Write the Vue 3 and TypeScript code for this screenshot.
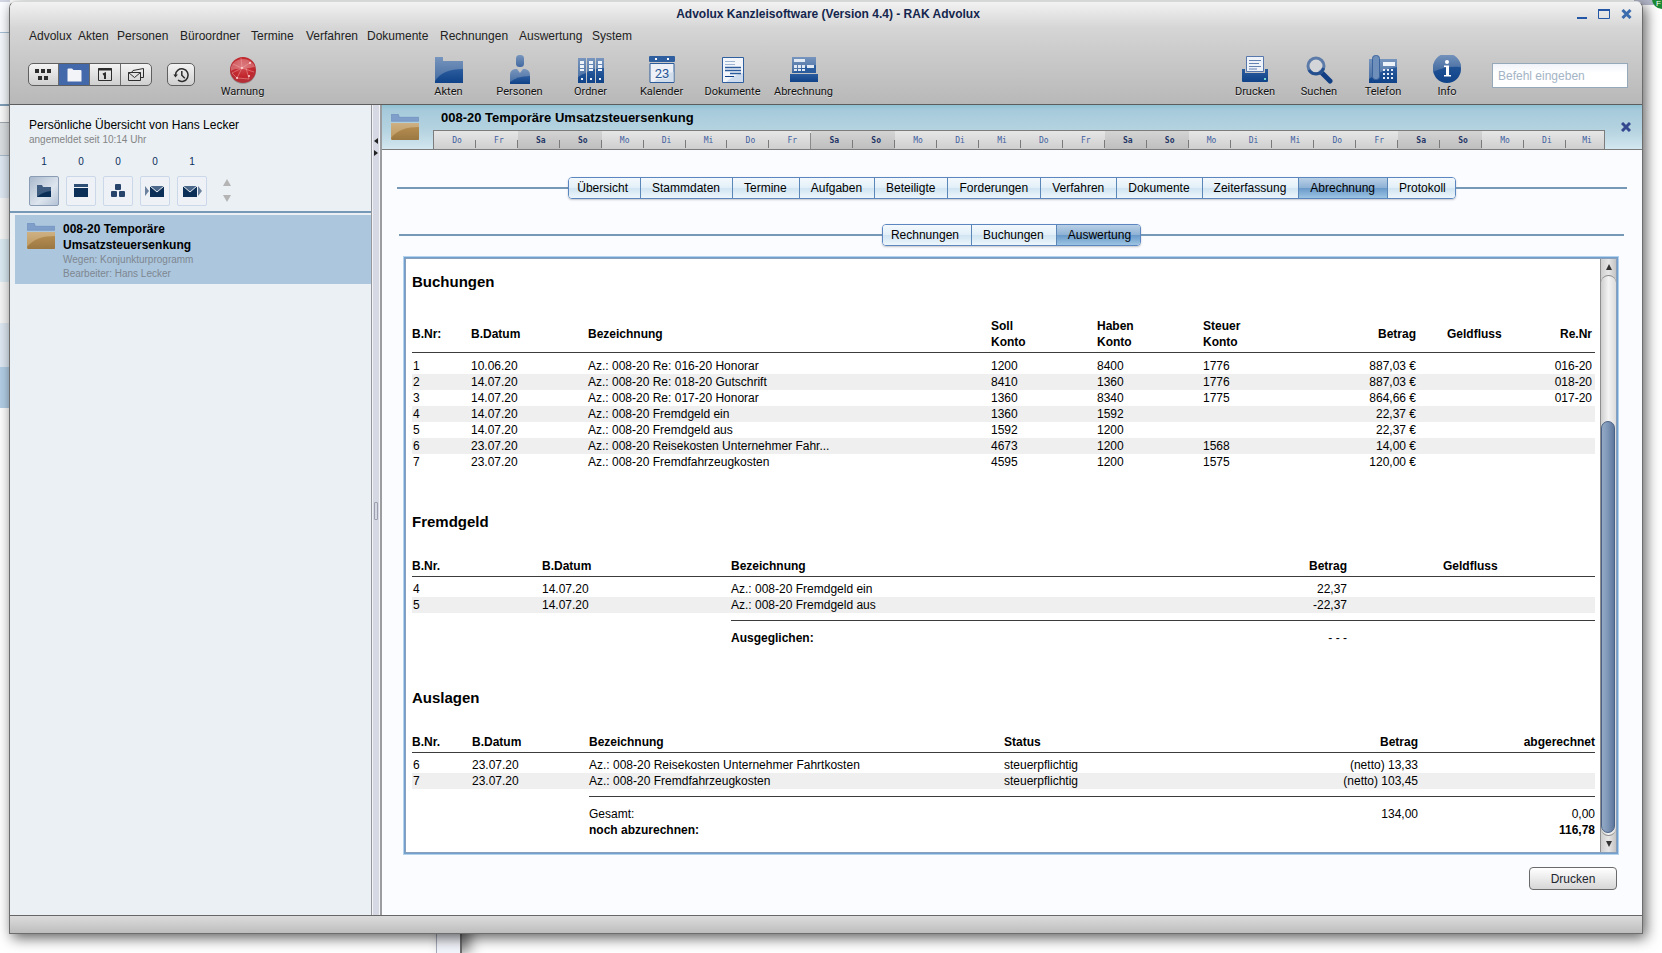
<script setup lang="ts">
import { ref } from 'vue'

interface Booking {
  nr: number
  date: string
  text: string
  soll: string
  haben: string
  steuer: string
  amount: string
  bill: string
}

const menu = ['Advolux', 'Akten', 'Personen', 'Büroordner', 'Termine', 'Verfahren', 'Dokumente', 'Rechnungen', 'Auswertung', 'System']
const tabs = ['Übersicht', 'Stammdaten', 'Termine', 'Aufgaben', 'Beteiligte', 'Forderungen', 'Verfahren', 'Dokumente', 'Zeiterfassung', 'Abrechnung', 'Protokoll']
const subTabs = ['Rechnungen', 'Buchungen', 'Auswertung']
const activeTab = ref('Abrechnung')
const activeSub = ref('Auswertung')
const command = ref('')

const week = ['Mo', 'Di', 'Mi', 'Do', 'Fr', 'Sa', 'So']
const days = Array.from({ length: 28 }, (_, i) => week[(i + 3) % 7])
const isWeekend = (d: string) => d === 'Sa' || d === 'So'

const bookings: Booking[] = [
  { nr: 1, date: '10.06.20', text: 'Az.: 008-20 Re: 016-20 Honorar', soll: '1200', haben: '8400', steuer: '1776', amount: '887,03 €', bill: '016-20' },
  { nr: 2, date: '14.07.20', text: 'Az.: 008-20 Re: 018-20 Gutschrift', soll: '8410', haben: '1360', steuer: '1776', amount: '887,03 €', bill: '018-20' },
  { nr: 3, date: '14.07.20', text: 'Az.: 008-20 Re: 017-20 Honorar', soll: '1360', haben: '8340', steuer: '1775', amount: '864,66 €', bill: '017-20' },
  { nr: 4, date: '14.07.20', text: 'Az.: 008-20 Fremdgeld ein', soll: '1360', haben: '1592', steuer: '', amount: '22,37 €', bill: '' },
  { nr: 5, date: '14.07.20', text: 'Az.: 008-20 Fremdgeld aus', soll: '1592', haben: '1200', steuer: '', amount: '22,37 €', bill: '' },
  { nr: 6, date: '23.07.20', text: 'Az.: 008-20 Reisekosten Unternehmer Fahr...', soll: '4673', haben: '1200', steuer: '1568', amount: '14,00 €', bill: '' },
  { nr: 7, date: '23.07.20', text: 'Az.: 008-20 Fremdfahrzeugkosten', soll: '4595', haben: '1200', steuer: '1575', amount: '120,00 €', bill: '' },
]
const foreignFunds = [
  { nr: 4, date: '14.07.20', text: 'Az.: 008-20 Fremdgeld ein', amount: '22,37' },
  { nr: 5, date: '14.07.20', text: 'Az.: 008-20 Fremdgeld aus', amount: '-22,37' },
]
const expenses = [
  { nr: 6, date: '23.07.20', text: 'Az.: 008-20 Reisekosten Unternehmer Fahrtkosten', status: 'steuerpflichtig', amount: '(netto) 13,33' },
  { nr: 7, date: '23.07.20', text: 'Az.: 008-20 Fremdfahrzeugkosten', status: 'steuerpflichtig', amount: '(netto) 103,45' },
]
</script>

<template>
  <div class="desktop">
    <div class="behind-left"></div>
    <div class="behind-bottom"></div>
    <div class="behind-tab"></div>
    <div class="behind-badge">F</div>

    <svg class="defs" width="0" height="0" aria-hidden="true">
      <defs>
        <linearGradient id="blueTop" x1="0" y1="0" x2="0" y2="1">
          <stop offset="0" stop-color="#7795bd" /><stop offset="1" stop-color="#41699f" />
        </linearGradient>
        <linearGradient id="blueLow" x1="0" y1="0" x2="0" y2="1">
          <stop offset="0" stop-color="#2b5c9e" /><stop offset="1" stop-color="#0f4288" />
        </linearGradient>
        <linearGradient id="tan" x1="0" y1="0" x2="0" y2="1">
          <stop offset="0" stop-color="#cdb083" /><stop offset="1" stop-color="#bd965a" />
        </linearGradient>
        <linearGradient id="tanLow" x1="0" y1="0" x2="0" y2="1">
          <stop offset="0" stop-color="#b48c50" /><stop offset="1" stop-color="#9b7842" />
        </linearGradient>
        <radialGradient id="globe" cx="0.5" cy="0.4" r="0.6">
          <stop offset="0" stop-color="#cf4a50" /><stop offset="0.6" stop-color="#c2262c" /><stop offset="1" stop-color="#b0323a" />
        </radialGradient>
        <symbol id="caseFolder" viewBox="0 0 28 26">
          <path d="M.3.300h7l1 3h19.400v4H.3z" fill="#7f9fca" stroke="#6a8ab8" stroke-width="0.6" />
          <path d="M0 9h28V25a1 1 0 0 1-1 1H1a1 1 0 0 1-1-1z" fill="url(#tan)" />
          <path d="M0 24C6 16 16 13 28 13v12a1 1 0 0 1-1 1H1z" fill="url(#tanLow)" />
        </symbol>
      </defs>
    </svg>

    <div class="window">
      <header class="head">
        <div class="titlebar">
          <h1>Advolux Kanzleisoftware (Version 4.4) - RAK Advolux</h1>
          <div class="wincontrols">
            <button aria-label="Minimieren"><svg width="10" height="10"><path d="M0 9h10" stroke="#2458a6" stroke-width="2" /></svg></button>
            <button aria-label="Maximieren"><svg width="12" height="10"><path d="M.5 1.500h11v8H.5z" fill="none" stroke="#2458a6" /><path d="M0 1h12" stroke="#2458a6" stroke-width="2" /></svg></button>
            <button aria-label="Schließen"><svg width="11" height="10"><path d="M1.500 1l8 8M9.500 1l-8 8" stroke="#3b6cad" stroke-width="3" /></svg></button>
          </div>
        </div>
        <nav class="menu">
          <button v-for="m in menu" :key="m">{{ m }}</button>
        </nav>
        <div class="toolbar">
          <div class="views">
            <div class="segment">
              <button aria-label="Kacheln"><svg width="17" height="12" fill="#2d2d2d"><path d="M0 0h4v4H0zM6 0h4v4H6zM12 0h4v4h-4zM3 7h4v4H3zM9 7h4v4H9z" /></svg></button>
              <button class="on" aria-label="Akten"><svg width="15" height="14"><path d="M.5 1.500Q.5.500 1.500.500H5L6.500 2H13.500Q14.500 2 14.500 3V13.500H.5z" fill="#f2f4f8" /></svg></button>
              <button aria-label="Kalender"><svg width="14" height="13" fill="none" stroke="#2d2d2d"><path d="M.5.500h13v12H.5z" /><path d="M0 1.500h14" stroke-width="2" /><path d="M5 6.500L7 5.500v5.500" stroke-width="2" /></svg></button>
              <button aria-label="Post"><svg width="17" height="13" fill="none" stroke="#2d2d2d"><path d="M.5 4.500h12v8H.5zM.5 4.500l6 5 6-5" /><path d="M3.500 4.500L5 2.500 15.500.500v9h-3" /></svg></button>
            </div>
            <button class="clock" aria-label="Verlauf"><svg width="17" height="16" fill="none" stroke="#2d2d2d" stroke-width="1.500"><path d="M2.500 8A6.300 6.300 0 1 1 5 13.200" /><path d="M8.800 4v4.200l3 3" /><path d="M.3 7.500h4.600L2.500 10.500z" fill="#2d2d2d" stroke="none" /></svg></button>
            <button class="tool warn">
              <svg width="28" height="29"><circle cx="14" cy="16" r="13" fill="#00000030" /><circle cx="14" cy="15" r="13" fill="url(#globe)" />
                <path d="M2 16C8 12 14 15 26 12A13 13 0 0 0 2 12z" fill="#fff" opacity=".28" />
                <g fill="none" stroke="#f2a6a9" stroke-width=".5"><path d="M4 9L13 13L22 7M13 13L8 23L20 24M13 13L25 17M3 18L13 13L12 3M8 23L3 18M20 24L17 13" /></g>
                <g fill="#ffd8d9"><circle cx="13" cy="13" r="1" /><circle cx="8" cy="23" r="1" /><circle cx="20" cy="21" r="1" /><circle cx="21" cy="8" r="1" /></g></svg>
              <span>Warnung</span>
            </button>
          </div>

          <div class="tools main-tools">
            <button class="tool">
              <svg width="28" height="29"><path d="M0 2h8v4h20v22H0z" fill="url(#blueTop)" /><path d="M0 28V26C5 18 14 14 28 14v14z" fill="url(#blueLow)" /></svg>
              <span>Akten</span>
            </button>
            <button class="tool">
              <svg width="22" height="29"><rect x="7" y="0" width="8" height="12" rx="3.500" fill="url(#blueTop)" /><path d="M1 29V20Q1 15 6 14L8 14 11 18 14 14 16 14Q21 15 21 20V29z" fill="url(#blueTop)" /><path d="M1 29V27Q8 21 21 21V29z" fill="url(#blueLow)" /></svg>
              <span>Personen</span>
            </button>
            <button class="tool">
              <svg width="28" height="29"><path d="M1 3h8v25H1zM10 3h8v25h-8zM19 3h8v25h-8z" fill="url(#blueTop)" /><path d="M1 22Q5 19 9 18v10H1zM10 17q4-2 8-3v14h-8zM19 14q5-1 8-1v15h-8z" fill="url(#blueLow)" />
                <path d="M3 6h4v3H3zM3 10h4v3H3zM3 14h4v2H3zM12 6h4v3h-4zM12 10h4v3h-4zM12 14h4v2h-4zM21 6h4v3h-4zM21 10h4v3h-4zM21 14h4v2h-4zM4 23h2v2H4zM13 23h2v2h-2zM22 23h2v2h-2z" fill="#eef3fa" /></svg>
              <span>Ordner</span>
            </button>
            <button class="tool">
              <svg width="26" height="29"><rect x="0" y="1" width="26" height="6" rx="1" fill="#2f5f9f" /><path d="M6 3h2v2H6zM18 3h2v2h-2z" fill="#fff" /><path d="M1 8.500h24v19H1z" fill="#edf1f7" stroke="#2d5c9c" /><path d="M5 27Q14 18 24.500 17V27z" fill="#d3deec" /><text x="13" y="23" text-anchor="middle" font-family="Roboto, sans-serif" font-size="13" fill="#2a5596">23</text></svg>
              <span>Kalender</span>
            </button>
            <button class="tool">
              <svg width="22" height="29"><path d="M.5 2.500h21v25H.5z" fill="#f2f6fb" stroke="#2f5f9f" /><path d="M4 27Q12 20 21 18v9z" fill="#cfdcee" /><path d="M3 6.500h10M3 9.500h10" stroke="#9db3d2" /><path d="M3 12.500h16M3 15.500h16M8 18.500h11" stroke="#2d5c9c" stroke-width="1.500" /><path d="M3 21.500h9" stroke="#0f4288" /></svg>
              <span>Dokumente</span>
            </button>
            <button class="tool">
              <svg width="28" height="29"><path d="M2 2h24v16H2z" fill="url(#blueTop)" /><path d="M2 18Q12 11 26 10v8z" fill="#2b5c9e" /><path d="M4 4h11v3H4zM17 10h7v3h-7zM4 10h3v3H4zM8 10h3v3H8zM12 10h3v3h-3zM4 14h3v2H4zM8 14h3v2H8zM12 14h3v2h-3z" fill="#dfe8f3" /><path d="M0 19h28v8H0z" fill="url(#blueLow)" /></svg>
              <span>Abrechnung</span>
            </button>
          </div>

          <div class="tools side-tools">
            <button class="tool">
              <svg width="26" height="29"><path d="M4.500 1.500h17v15h-17z" fill="#eef2f9" stroke="#5878ad" /><path d="M7 5.500h12M7 8.500h10M7 11.500h12M7 14h8" stroke="#6482b2" /><path d="M0 14h3v4h20v-4h3v12a1 1 0 0 1-1 1H1a1 1 0 0 1-1-1z" fill="url(#blueLow)" /><path d="M22 23h2v2h-2z" fill="#6fd6d0" /></svg>
              <span>Drucken</span>
            </button>
            <button class="tool">
              <svg width="28" height="29"><path d="M16 17l9 9" stroke="#123f83" stroke-width="5" stroke-linecap="round" /><circle cx="11" cy="11" r="8" fill="#d9dbdf" fill-opacity=".7" stroke="#5c7ba8" stroke-width="3" /><path d="M4 15A8 8 0 0 0 18.500 13" fill="none" stroke="#234f8f" stroke-width="3" /></svg>
              <span>Suchen</span>
            </button>
            <button class="tool">
              <svg width="28" height="29"><path d="M0 4h28v24H0z" fill="url(#blueTop)" /><path d="M0 28V24Q14 14 28 12v16z" fill="url(#blueLow)" /><rect x="3.500" y=".5" width="7" height="24" rx="3" fill="#6f8fbb" stroke="#3a629d" /><path d="M14 7h12v4H14z" fill="#eef3fa" /><path d="M14 14h2v2h-2zM18 14h2v2h-2zM22 14h2v2h-2zM14 18h2v2h-2zM18 18h2v2h-2zM22 18h2v2h-2zM14 22h2v2h-2zM18 22h2v2h-2zM22 22h2v2h-2z" fill="#e6edf7" /></svg>
              <span>Telefon</span>
            </button>
            <button class="tool">
              <svg width="28" height="29"><circle cx="14" cy="14" r="14" fill="url(#blueLow)" /><path d="M0 17Q12 11 28 12A14 14 0 0 0 0 13z" fill="url(#blueTop)" /><g fill="#fff"><circle cx="14" cy="7" r="2" /><path d="M11 10.500h5V20h2v1.500h-7V20h2V12h-2z" /></g></svg>
              <span>Info</span>
            </button>
          </div>
          <input v-model="command" class="command" type="text" aria-label="Befehl eingeben" placeholder="Befehl eingeben" />
        </div>
      </header>

      <div class="body">
        <aside class="sidebar">
          <div class="overview">
            <h2>Persönliche Übersicht von Hans Lecker</h2>
            <p>angemeldet seit 10:14 Uhr</p>
            <div class="quick">
              <div class="q"><span>1</span><button class="on" aria-label="Akten"><svg width="14" height="14"><path d="M0 1h5l1 2h8v10H0z" fill="#3d5c80" /><path d="M0 13Q5 8 14 7v6z" fill="#0c2f57" /></svg></button></div>
              <div class="q"><span>0</span><button aria-label="Termine"><svg width="14" height="14" fill="#0c2f57"><path d="M0 0h14v3H0z" fill="#2f4f75" /><path d="M0 4h14v9H0z" /></svg></button></div>
              <div class="q"><span>0</span><button aria-label="Beteiligte"><svg width="14" height="14" fill="#27456b"><rect x="4" y="0" width="6" height="6" rx="1" /><rect x="0" y="7" width="6" height="6" rx="1" /><rect x="8" y="7" width="6" height="6" rx="1" /></svg></button></div>
              <div class="q"><span>0</span><button aria-label="Posteingang"><svg width="20" height="14"><path d="M0 2l4 5-4 5z" fill="#6a809c" /><path d="M5 2h14v11H5z" fill="#0c2f57" /><path d="M5 2l7 6 7-6" fill="#4c688b" stroke="#eaf0f5" /></svg></button></div>
              <div class="q"><span>1</span><button aria-label="Postausgang"><svg width="20" height="14"><path d="M16 2l4 5-4 5z" fill="#6a809c" /><path d="M1 2h14v11H1z" fill="#0c2f57" /><path d="M1 2l7 6 7-6" fill="#4c688b" stroke="#eaf0f5" /></svg></button></div>
              <div class="sort">
                <button aria-label="Aufwärts"><svg width="8" height="7"><path d="M4 0l4 7H0z" fill="#b4b4b4" /></svg></button>
                <button aria-label="Abwärts"><svg width="8" height="7"><path d="M0 0h8L4 7z" fill="#b4b4b4" /></svg></button>
              </div>
            </div>
          </div>
          <a class="case" href="#">
            <svg width="28" height="26"><use href="#caseFolder" /></svg>
            <span class="case-text">
              <strong>008-20 Temporäre<br />Umsatzsteuersenkung</strong>
              <small>Wegen: Konjunkturprogramm</small>
              <small>Bearbeiter: Hans Lecker</small>
            </span>
          </a>
        </aside>

        <div class="splitter">
          <button aria-label="Einklappen"><svg width="4" height="6"><path d="M4 0v6L0 3z" fill="#222" /></svg></button>
          <button aria-label="Ausklappen"><svg width="4" height="6"><path d="M0 0v6l4-3z" fill="#222" /></svg></button>
          <span class="grip"></span>
        </div>

        <main class="main">
          <div class="casebar">
            <svg class="casebar-icon" width="28" height="26"><use href="#caseFolder" /></svg>
            <div class="casebar-mid">
              <h2>008-20 Temporäre Umsatzsteuersenkung</h2>
              <div class="days">
                <div v-for="(d, i) in days" :key="i" class="day" :class="{ weekend: isWeekend(d), week: i === 8 }">{{ d }}</div>
              </div>
            </div>
            <button class="case-close" aria-label="Akte schließen"><svg width="10" height="10"><path d="M1 1l8 8M9 1L1 9" stroke="#33488e" stroke-width="3" /></svg></button>
          </div>

          <div class="tabrow">
            <div class="tabs">
              <button v-for="t in tabs" :key="t" :class="{ on: t === activeTab }" @click="activeTab = t">{{ t }}</button>
            </div>
          </div>
          <div class="tabrow sub">
            <div class="tabs">
              <button v-for="t in subTabs" :key="t" :class="{ on: t === activeSub }" @click="activeSub = t">{{ t }}</button>
            </div>
          </div>

          <section class="report">
            <div class="sheet">
              <h3>Buchungen</h3>
              <table>
                <colgroup>
                  <col class="c-nr" /><col class="c-date" /><col /><col class="c-konto" /><col class="c-konto" /><col class="c-tax" /><col class="c-amount" /><col class="c-flow" /><col class="c-bill" />
                </colgroup>
                <thead>
                  <tr>
                    <th>B.Nr:</th><th>B.Datum</th><th>Bezeichnung</th><th>Soll<br />Konto</th><th>Haben<br />Konto</th><th>Steuer<br />Konto</th><th class="r">Betrag</th><th class="flow">Geldfluss</th><th class="r end">Re.Nr</th>
                  </tr>
                </thead>
                <tbody>
                  <tr v-for="b in bookings" :key="b.nr">
                    <td>{{ b.nr }}</td><td>{{ b.date }}</td><td>{{ b.text }}</td><td>{{ b.soll }}</td><td>{{ b.haben }}</td><td>{{ b.steuer }}</td><td class="r">{{ b.amount }}</td><td></td><td class="r end">{{ b.bill }}</td>
                  </tr>
                </tbody>
              </table>

              <h3>Fremdgeld</h3>
              <table>
                <colgroup>
                  <col class="f-nr" /><col class="f-date" /><col /><col class="f-amount" /><col class="f-flow" />
                </colgroup>
                <thead>
                  <tr><th>B.Nr.</th><th>B.Datum</th><th>Bezeichnung</th><th class="r">Betrag</th><th class="f-geld">Geldfluss</th></tr>
                </thead>
                <tbody>
                  <tr v-for="f in foreignFunds" :key="f.nr">
                    <td>{{ f.nr }}</td><td>{{ f.date }}</td><td>{{ f.text }}</td><td class="r">{{ f.amount }}</td><td></td>
                  </tr>
                </tbody>
                <tfoot>
                  <tr><td class="blank" colspan="2"></td><th>Ausgeglichen:</th><td class="r">- - -</td><td></td></tr>
                </tfoot>
              </table>

              <h3>Auslagen</h3>
              <table>
                <colgroup>
                  <col class="a-nr" /><col class="a-date" /><col /><col class="a-status" /><col class="a-amount" /><col class="a-done" />
                </colgroup>
                <thead>
                  <tr><th>B.Nr.</th><th>B.Datum</th><th>Bezeichnung</th><th>Status</th><th class="r">Betrag</th><th class="r">abgerechnet</th></tr>
                </thead>
                <tbody>
                  <tr v-for="a in expenses" :key="a.nr">
                    <td>{{ a.nr }}</td><td>{{ a.date }}</td><td>{{ a.text }}</td><td>{{ a.status }}</td><td class="r">{{ a.amount }}</td><td></td>
                  </tr>
                </tbody>
                <tfoot>
                  <tr><td class="blank" colspan="2"></td><td>Gesamt:</td><td></td><td class="r">134,00</td><td class="r">0,00</td></tr>
                  <tr class="total"><td class="blank" colspan="2"></td><th>noch abzurechnen:</th><td></td><td></td><th class="r">116,78</th></tr>
                </tfoot>
              </table>
            </div>
            <div class="scrollbar">
              <button aria-label="Nach oben"><svg width="6" height="6"><path d="M3 0l3 6H0z" fill="#333" /></svg></button>
              <div class="track"><div class="thumb"></div></div>
              <button aria-label="Nach unten"><svg width="6" height="6"><path d="M0 0h6L3 6z" fill="#333" /></svg></button>
            </div>
          </section>

          <div class="actions"><button class="print">Drucken</button></div>
        </main>
      </div>
      <footer class="status"></footer>
    </div>
  </div>
</template>

<style>
body { margin: 0; }
</style>

<style scoped>
* { box-sizing: border-box; }
.desktop {
  position: relative;
  display: flex;
  min-height: 100vh;
  padding: 1px 19px 19px 9px;
  overflow: hidden;
  background: #fff;
  font-family: "Liberation Sans", Arial, sans-serif;
  font-size: 12px;
  line-height: 16px;
  color: #000;
}
.defs { position: absolute; }
button {
  margin: 0;
  padding: 0;
  border: 0;
  background: none;
  font: inherit;
  color: inherit;
}
svg { display: block; }
h1, h2, h3, p { margin: 0; }

/* windows lying underneath */
.behind-left {
  position: absolute;
  left: 0;
  top: 0;
  width: 10px;
  height: 409px;
  background: linear-gradient(#d3d6e3 0 2px, #fbfcff 2px 32px, #a5bfd4 32px 33px, #f4f7fb 33px 104px, #7f9fb9 104px 106px, #fafafa 106px 122px, #a0a8b0 122px 123px, #dcdfe2 123px 155px, #a9bccb 155px 156px, #dfe9f3 156px 198px, #f6f6f6 198px 239px, #dcebf3 239px 282px, #f6f6f6 282px 323px, #dfe9f3 323px 367px, #b3cfe6 367px 408px, #fff 408px);
}
.behind-bottom {
  position: absolute;
  left: 436px;
  bottom: 0;
  width: 26px;
  height: 30px;
  border-left: 1px solid #a4aab8;
  border-right: 2px solid #6b6b6b;
  background: #f3f5fc;
  box-shadow: 8px 0 14px #00000080;
}
.behind-tab {
  position: absolute;
  right: 8px;
  top: 0;
  width: 20px;
  height: 5px;
  background: #b4b8cb;
}
.behind-badge {
  position: absolute;
  right: -10px;
  top: -11px;
  width: 20px;
  height: 20px;
  padding: 11px 0 0 4px;
  border-radius: 50%;
  background: #1c8a34;
  color: #fff;
  font-size: 8px;
  line-height: 8px;
}

.window {
  position: relative;
  flex: 1;
  display: flex;
  flex-direction: column;
  border: 1px solid #6d6d6d;
  border-top-color: #d6d8d8;
  border-radius: 7px 7px 0 0;
  background: #fbfcff;
  box-shadow: 3px 4px 14px #000000a0;
}

/* header */
.head {
  padding: 3px 14px 5px 18px;
  border-bottom: 1px solid #5d5d5d;
  border-radius: 6px 6px 0 0;
  background: linear-gradient(#f2f2f2, #d5d5d5 26%, #cbcbcb 50%, #b8b8b8);
}
.titlebar {
  display: grid;
  grid-template-columns: 1fr auto 1fr;
  align-items: start;
  height: 22px;
}
h1 { grid-column: 2; font-size: 12px; line-height: 18px; color: #14264d; }
.wincontrols { display: flex; justify-content: flex-end; gap: 11px; padding: 4px 0 0; margin-right: -4px; }
.menu {
  display: grid;
  grid-template-columns: 49px 39px 63px 71px 55px 61px 73px 79px 73px auto;
  justify-content: start;
  margin-left: 1px;
  color: #222;
}
.menu button { text-align: left; line-height: 18px; }
.toolbar { display: flex; align-items: flex-start; margin-top: 10px; }
.views { display: flex; align-items: flex-start; width: 385px; }
.segment {
  display: flex;
  height: 23px;
  margin-top: 8px;
  border: 1px solid #5f5f5f;
  border-radius: 5px;
  overflow: hidden;
  background: linear-gradient(#f4f4f4, #cfcfcf);
}
.segment button { display: grid; place-items: center; width: 31px; border-left: 1px solid #6b6b6b; }
.segment button:first-child { width: 29px; border-left: 0; }
.segment .on { background: #4469ab; }
.clock {
  display: grid;
  place-items: center;
  width: 28px;
  height: 23px;
  margin: 8px 0 0 15px;
  border: 1px solid #5f5f5f;
  border-radius: 5px;
  background: linear-gradient(#f4f4f4, #cfcfcf);
}
.tool {
  display: flex;
  flex-direction: column;
  align-items: center;
  gap: 1px;
  font-family: Roboto, sans-serif;
  font-size: 11px;
  line-height: 14px;
  color: #111;
  text-shadow: 0 1px 0 #ffffff90;
}
.warn { width: 71px; margin-left: 12px; }
.tools { display: flex; }
.main-tools .tool { width: 71px; }
.side-tools { margin-left: auto; }
.side-tools .tool { width: 64px; }
.command {
  width: 136px;
  height: 25px;
  margin: 8px 0 0 13px;
  padding: 0 5px;
  border: 1px solid #96a9ba;
  border-radius: 0;
  outline: 0;
  background: linear-gradient(#f0f3f9, #fff 40%);
  font: 12px "Liberation Sans", Arial, sans-serif;
}
.command::placeholder { color: #a3b4c6; opacity: 1; }

/* body */
.body { flex: 1; display: flex; }
.sidebar { width: 361px; background: #eaf0f4; }
.overview { padding: 12px 19px 5px; border-bottom: 2px solid #7799b8; }
.overview h2 { font-size: 12px; font-weight: normal; }
.overview p { font-size: 10px; line-height: 14px; color: #858585; }
.quick { display: flex; gap: 7px; margin-top: 8px; }
.q { display: flex; flex-direction: column; gap: 7px; font-size: 10px; text-align: center; color: #0c2f5c; }
.q span { line-height: 14px; }
.q button {
  display: grid;
  place-items: center;
  width: 30px;
  height: 30px;
  border: 1px solid #cbd8ea;
  border-radius: 2px;
  background: #eef2f7;
}
.q .on { border-color: #8b9db5; background: linear-gradient(135deg, #a9b9cc, #dde5ee 60%, #b3c2d5); }
.sort { display: flex; flex-direction: column; gap: 9px; margin: 24px 0 0 9px; }
.case {
  display: flex;
  gap: 8px;
  margin: 2px 0 0 5px;
  padding: 6px 12px 3px;
  background: #abc6dd;
  color: #000;
  text-decoration: none;
}
.case svg { margin-top: 2px; }
.case-text { display: flex; flex-direction: column; }
.case small { font-size: 10px; line-height: 14px; color: #7f8791; }

.splitter {
  position: relative;
  display: flex;
  flex-direction: column;
  align-items: center;
  gap: 6px;
  width: 11px;
  padding-top: 33px;
  border-left: 1px solid #96979c;
  border-right: 2px solid #9a9ca0;
  background: #d6d9e3;
  box-shadow: inset 1px 0 #f2f3f6, inset -1px 0 #f2f3f6;
}
.grip {
  position: absolute;
  top: 49%;
  left: 2px;
  width: 4px;
  height: 18px;
  border: 1px solid #9b9fae;
  border-radius: 1px;
}

/* main */
.main { flex: 1; min-width: 0; display: flex; flex-direction: column; }
.casebar {
  display: flex;
  height: 45px;
  padding: 0 11px 0 9px;
  border-bottom: 1px solid #7c7c7c;
  background: linear-gradient(#8fc2d4, #a6cadb 12%, #b6d4e1 60%, #d3e7ef);
}
.casebar-icon { margin-top: 9px; }
.casebar-mid { flex: 1; display: flex; flex-direction: column; margin: 0 16px 0 14px; }
.casebar h2 { padding-left: 8px; font-size: 13px; line-height: 25px; }
.days {
  flex: 1;
  display: flex;
  border: 1px solid #7c7c7c;
  border-bottom: 0;
  background: linear-gradient(#e6e6e6, #cfcfcf);
}
.day {
  flex: 42 1 0;
  padding: 2px 0 0 4px;
  background: linear-gradient(#7a7a7a, #7a7a7a) right 9px / 1px 8px no-repeat;
  font-family: "DejaVu Sans Mono", monospace;
  font-size: 8px;
  line-height: 16px;
  text-align: center;
  color: #41609f;
}
.day:last-child { flex-grow: 38; background: none; }
.weekend { background-color: #00000014; color: #1f3566; font-weight: bold; }
.week { background: linear-gradient(#8a8a8a, #8a8a8a) right 2px / 1px 16px no-repeat; }
.case-close { align-self: flex-start; margin-top: 17px; }

.tabrow { display: flex; align-items: center; margin: 27px 15px 0; }
.tabrow::before, .tabrow::after { content: ""; flex: 1; height: 2px; background: #7799b8; }
.tabrow.sub { margin: 25px 18px 0 17px; }
.tabs {
  display: flex;
  height: 22px;
  border: 1px solid #5b86c0;
  border-radius: 4px;
  overflow: hidden;
  box-shadow: 0 1px 2px #00000038;
}
.tabs button {
  padding: 0 12px 0 11px;
  border-left: 1px solid #5b86b8;
  background: linear-gradient(#f4f9fd, #e2eff8 48%, #d0e4f2 52%, #edf6fb);
  line-height: 20px;
}
.tabs button:first-child { padding-left: 8px; border-left: 0; }
.tabs button:last-child { padding-right: 9px; }
.tabs button.on { background: linear-gradient(#b9d0e6, #8fb2d5 48%, #6a9aca 52%, #9cc4e2); }

.report {
  flex: 1;
  display: flex;
  margin: 10px 23px 0 21px;
  padding: 2px;
  border: 1px solid #b5d2ec;
  background: #fff;
  box-shadow: inset 0 0 0 1px #729fcd, inset 0 0 0 2px #88a0bb;
}
.sheet { flex: 1; padding: 13px 5px 0 6px; }
h3 { font-size: 15px; line-height: 20px; }
table {
  width: 100%;
  margin: 26px 0 42px;
  table-layout: fixed;
  border-collapse: collapse;
}
table:last-child { margin-bottom: 0; }
th, td { padding: 0; text-align: left; font-weight: normal; white-space: nowrap; }
th { font-weight: bold; }
td:first-child { padding-left: 1px; }
thead th { padding-bottom: 2px; border-bottom: 1px solid #3c3c3c; }
tbody::before { content: ""; display: table-row; height: 5px; }
tbody tr:nth-child(even) { background: #efefef; }
.r { text-align: right; }
.end { padding-right: 3px; }
.flow { padding-left: 31px; }
.c-nr { width: 59px; }
.c-date { width: 117px; }
.c-konto { width: 106px; }
.c-tax { width: 106px; }
.c-amount { width: 107px; }
.c-flow { width: 85px; }
.c-bill { width: 94px; }
.f-nr { width: 130px; }
.f-date { width: 189px; }
.f-amount { width: 106px; }
.f-flow { width: 248px; }
.f-geld { padding-left: 96px; }
.a-nr { width: 60px; }
.a-date { width: 117px; }
.a-status { width: 280px; }
.a-amount { width: 134px; }
.a-done { width: 177px; }
tfoot::before { content: ""; display: table-row; height: 7px; }
tfoot tr:first-child > * { padding-top: 9px; border-top: 1px solid #3c3c3c; }
tfoot tr:first-child > .blank { border-top: 0; }

.scrollbar {
  display: flex;
  flex-direction: column;
  width: 16px;
  border-left: 1px solid #8e8e8e;
  background: linear-gradient(90deg, #cfcfcf, #e6e6e6 50%, #c4c4c4);
}
.scrollbar button { display: grid; place-items: center; height: 16px; }
.track {
  flex: 1;
  display: flex;
  align-items: flex-end;
  padding-bottom: 2px;
  border: 1px solid #8a8a8a;
  border-width: 1px 0;
  border-radius: 8px;
  background: linear-gradient(90deg, #cfcfcf, #f3f3f3 50%, #dcdcdc);
}
.thumb {
  width: 14px;
  height: 74%;
  border: 1px solid #4a6186;
  border-radius: 7px;
  background: linear-gradient(90deg, #93a9c5, #8098b8 45%, #5d779d);
}

.actions { display: flex; justify-content: flex-end; padding: 12px 25px 25px; }
.print {
  width: 88px;
  height: 23px;
  border: 1px solid #6a6a6a;
  border-radius: 4px;
  background: linear-gradient(#fff, #d6d6d6);
  color: #22262e;
}
.status { height: 18px; border-top: 1px solid #666; background: linear-gradient(#dcdcdc, #bdbdbd); }
</style>
